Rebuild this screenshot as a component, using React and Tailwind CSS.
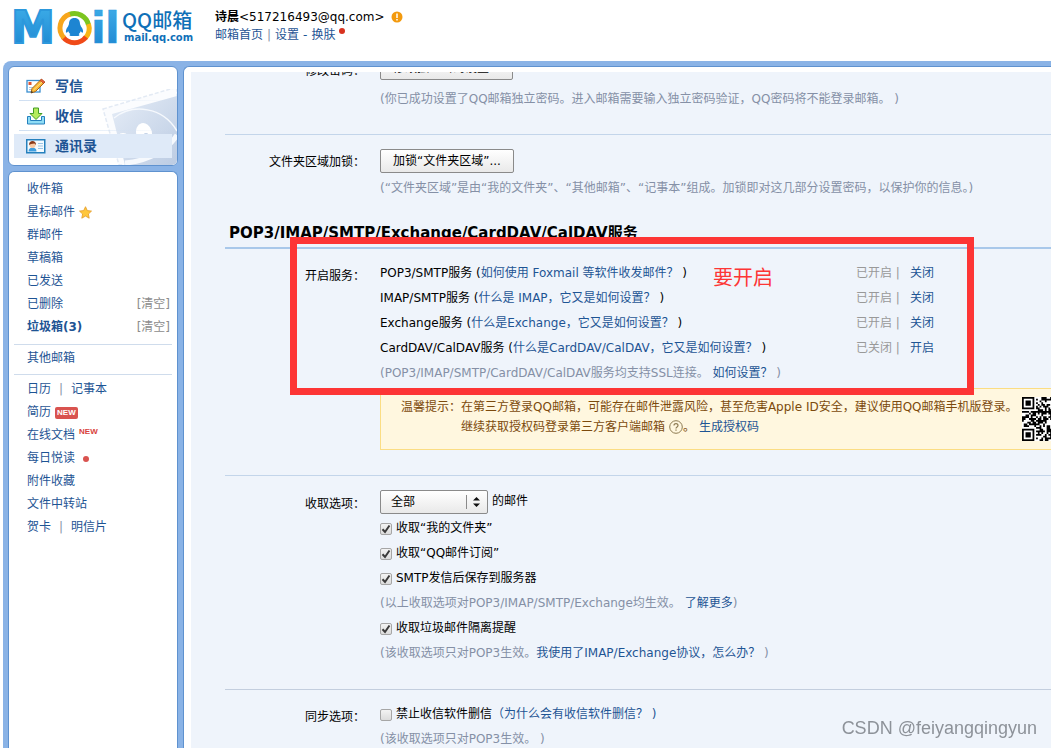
import React, { useState } from 'react';

// --- DATA ---
const mainFolders = [
  { name: '收件箱' },
  { name: '星标邮件', star: true },
  { name: '群邮件' },
  { name: '草稿箱' },
  { name: '已发送' },
  { name: '已删除', clear: true },
  { name: '垃圾箱(3)', clear: true, bold: true },
];

const services = [
  { name: 'POP3/SMTP服务', help: '如何使用 Foxmail 等软件收发邮件？', status: '已开启', action: '关闭' },
  { name: 'IMAP/SMTP服务', help: '什么是 IMAP，它又是如何设置？', status: '已开启', action: '关闭' },
  { name: 'Exchange服务', help: '什么是Exchange，它又是如何设置？', status: '已开启', action: '关闭' },
  { name: 'CardDAV/CalDAV服务', help: '什么是CardDAV/CalDAV，它又是如何设置？', status: '已关闭', action: '开启' },
];

// --- ICONS ---
const Logo = () => (
  <svg width="186" height="60" viewBox="0 0 186 60" className="shrink-0" role="img" aria-label="QQ邮箱">
    <defs>
      <linearGradient id="logoBlue" x1="0" y1="0" x2="0" y2="1">
        <stop offset="0" stopColor="#3fb0ea" />
        <stop offset="1" stopColor="#1b83cf" />
      </linearGradient>
    </defs>
    <g fill="url(#logoBlue)" stroke="#2c98dc" fontFamily="DejaVu Sans, sans-serif" fontWeight="bold" fontSize="43">
      <text x="0" y="43" fontSize="44" strokeWidth="2">M</text>
      <text x="80" y="43" strokeWidth=".5">i</text>
      <text x="94" y="43" strokeWidth=".5">l</text>
    </g>
    <circle cx="63.500" cy="28" r="18.500" fill="#fff" />
    <g fill="none" strokeWidth="5">
      <path d="M58 14.500A14.500 14.500 0 0 1 77.500 25" stroke="#7cc51f" />
      <path d="M77.500 24A14.500 14.500 0 0 1 74 38.500" stroke="#f9b515" />
      <path d="M75 37A14.500 14.500 0 0 1 52 37" stroke="#f04a18" />
      <path d="M53 38A14.500 14.500 0 0 1 59 14.200" stroke="#f7a61c" />
    </g>
    <path d="M63.500 18c-4 0-5.500 2.600-5.500 6l-1 2.500c-2 2.500-2.500 5-1.800 6.200.9 0 1.700-.8 1.900-1.700.6 1.400 1.300 2.300 2.200 3-1.300.9-.9 2 .7 2h7c1.600 0 2-1.100.7-2 .9-.7 1.600-1.600 2.200-3 .2.900 1 1.700 1.900 1.700.7-1.200.2-3.700-1.800-6.200l-1-2.500c0-3.400-1.500-6-5.500-6z" fill="#1d85d2" />
    <g fill="#0f70b8">
      <text x="111" y="28" fontSize="20" fontFamily="Noto Sans CJK SC, sans-serif" fontWeight="500">QQ邮箱</text>
      <text x="113" y="41" fontSize="10" fontFamily="DejaVu Sans, sans-serif" fontWeight="bold">mail.qq.com</text>
    </g>
  </svg>
);

const WriteIcon = () => (
  <svg width="20" height="16" viewBox="0 0 20 16">
    <rect x="1" y="2.500" width="13" height="11.500" fill="#fff" stroke="#3b8fd0" strokeWidth="1.300" />
    <rect x="2.500" y="4" width="3" height="3" fill="#e0532f" />
    <path d="M3 9.500h5M3 11.500h4" stroke="#a9c8e4" />
    <path d="M5 15l1-4.500L15 1.500l3.500 3L9.500 13.500z" fill="#f9b935" stroke="#a8641a" />
    <path d="M14 2.500l1.500-1.500 3.500 3L17.500 5.500z" fill="#e9623f" stroke="#a8401a" strokeWidth=".7" />
    <path d="M7.500 12L16 4" stroke="#fde08a" />
    <path d="M5 15l.500-2.300 1.700 1.500z" fill="#333" />
  </svg>
);

const ReceiveIcon = () => (
  <svg width="20" height="18" viewBox="0 0 20 18">
    <path d="M1.500 9.500h3v4h11v-4h3v7.500h-17z" fill="#8fdcf5" stroke="#2580bd" />
    <path d="M7.500 1h5v5.500h3.500L10 12.500 4 6.500h3.500z" fill="#b6ec5c" stroke="#449c25" />
  </svg>
);

const ContactIcon = () => (
  <svg width="20" height="15" viewBox="0 0 20 15">
    <rect x=".75" y=".75" width="18" height="13" fill="#f4fbff" stroke="#2580bd" strokeWidth="1.500" />
    <path d="M2.500 12.500c0-3 2-4 4-4s4 1 4 4z" fill="#3f9ee0" />
    <circle cx="6.500" cy="6" r="3" fill="#f8c9a4" />
    <path d="M3 6c0-3 1.500-4 3.500-4S10 3 10 6L8.500 4.500 5 5z" fill="#8b3a1a" />
    <path d="M12 4.500h5M12 7h5M12 9.500h5" stroke="#9cc4e4" />
  </svg>
);

const StarIcon = () => (
  <svg width="13" height="13" viewBox="0 0 13 13" className="ml-1">
    <path d="M6.500.7l1.800 3.900 4.200.5-3.100 2.900.8 4.200-3.700-2.100-3.700 2.100.8-4.200L.5 5.100l4.200-.5z" fill="#ffc73c" stroke="#e39a28" strokeWidth=".8" />
  </svg>
);

const StampArt = () => (
  <svg width="76" height="76" viewBox="0 0 76 76">
    <defs>
      <linearGradient id="stampBlue" x1="0" y1="0" x2="1" y2="1">
        <stop offset="0" stopColor="#e6edf7" />
        <stop offset="1" stopColor="#bccce3" />
      </linearGradient>
    </defs>
    <path d="M2 20L76 -2V76H18z" fill="#fbfcfe" stroke="#e3eaf4" strokeWidth="1.500" strokeDasharray="4 2" />
    <path d="M11 25L76 7V76H24z" fill="url(#stampBlue)" />
    <path d="M13 29C32 14 62 18 76 42" fill="none" stroke="#f6f9fd" strokeWidth="1.500" />
    <ellipse cx="43" cy="44" rx="8" ry="10" transform="rotate(-15 43 44)" fill="#fff" />
    <ellipse cx="45" cy="48" rx="3" ry="4" fill="#c0d0e6" />
    <ellipse cx="22" cy="52" rx="7" ry="8" fill="#fff" />
    <path d="M24 74C46 72 66 62 76 46" fill="none" stroke="#f6f9fd" strokeWidth="5" />
  </svg>
);

const QrCode = () => {
  const size = 25;
  const cells = [];
  const finder = (x, y) => {
    if (x > 7 && x < size - 8) return null;
    if (y > 7 && y < size - 8) return null;
    if (x > 7 && y > 7) return null;
    const fx = x > 7 ? size - 1 - x : x;
    const fy = y > 7 ? size - 1 - y : y;
    if (fx === 7 || fy === 7) return false;
    const d = Math.max(Math.abs(fx - 3), Math.abs(fy - 3));
    return d !== 2;
  };
  for (let y = 0; y < size; y++) {
    for (let x = 0; x < size; x++) {
      const f = finder(x, y);
      const noise = (x * 37 + y * 61 + x * y * 17 + ((x * x) ^ (y * 7))) % 11 < 6;
      if (f === null ? noise : f) cells.push(`M${x} ${y}h1v1h-1z`);
    }
  }
  return (
    <svg width="44" height="44" viewBox="0 0 25 25" className="-mb-1 ml-1 shrink-0">
      <rect width="25" height="25" fill="#fff" />
      <path d={cells.join('')} fill="#000" />
    </svg>
  );
};

// --- SMALL PARTS ---
const Link = ({ children, className = '' }) => (
  <a href="#" className={`text-[#1e5494] hover:underline ${className}`}>{children}</a>
);

const Check = ({ label, defaultChecked, children }) => {
  const [on, setOn] = useState(!!defaultChecked);
  return (
    <div className="flex items-center">
      <label className="flex items-center gap-1">
        <span className="relative flex">
          <input type="checkbox" checked={on} onChange={(e) => setOn(e.target.checked)} className="size-3 appearance-none rounded-xs border border-[#a6a6a6] bg-linear-to-b from-[#f3f3f3] to-[#dcdcdc]" />
          {on && (
            <svg width="12" height="12" viewBox="0 0 12 12" className="pointer-events-none absolute inset-0">
              <path d="M2.500 6.300l2.500 2.700 4.500-6.500" fill="none" stroke="#3a3a3a" strokeWidth="2" />
            </svg>
          )}
        </span>
        {label}
      </label>
      {children}
    </div>
  );
};

const Row = ({ label, className = '', children }) => (
  <section className={`flex ${className}`}>
    <div className="w-[140px] shrink-0 text-right mr-[15px] pt-[3px]">{label}</div>
    <div className="min-w-0 flex-1">{children}</div>
  </section>
);

const GrayButton = ({ children }) => (
  <button className="block h-6 rounded-xs border border-[#8a8a8a] bg-linear-to-b from-white to-[#e9e9e9] px-3 leading-5">{children}</button>
);

const Bar = () => <span className="mx-2 text-[#8a94a6]">|</span>;

const NavItem = ({ icon, label, active }) => (
  <a href="#" className={`flex h-6 items-center pl-3 text-sm font-bold text-[#1e5494] ${active ? 'bg-[#dfeaf8]' : ''}`}>
    <span className="w-[29px]">{icon}</span>
    {label}
  </a>
);

const App = () => {
  const [range, setRange] = useState('全部');

  return (
    <div className="flex h-screen flex-col overflow-hidden bg-white font-['DejaVu_Sans','Noto_Sans_CJK_SC',sans-serif] text-xs text-black">
      {/* HEADER */}
      <header className="flex h-[61px] shrink-0 items-start gap-[18px] pl-[11px]">
        <Logo />
        <div className="pt-2 leading-[18px]">
          <div className="flex items-center">
            <b>诗晨</b>&lt;517216493@qq.com&gt;
            <svg width="12" height="12" viewBox="0 0 12 12" className="ml-[6px]">
              <circle cx="6" cy="6" r="5.500" fill="#f39a0e" />
              <path d="M6 2.500v4.500M6 8v1.500" stroke="#fff" strokeWidth="1.500" />
            </svg>
          </div>
          <div className="flex text-[#1e5494]">
            <Link>邮箱首页</Link>
            <span className="mx-1 text-[#8a94a6]">|</span>
            <Link>设置</Link>
            <span className="mx-1">-</span>
            <Link>换肤</Link>
            <span className="ml-1 mt-[2px] size-1.5 rounded-full bg-[#d8321f]" />
          </div>
        </div>
      </header>

      {/* BLUE FRAME */}
      <div className="ml-[3px] flex min-h-0 flex-1 gap-[5px] rounded-tl-lg bg-[#8ab3e6] pl-[5px] pt-[5px]">
        <aside className="flex w-[170px] shrink-0 flex-col gap-[5px]">
          <nav className="relative overflow-hidden rounded-md border border-[#5f92cf] bg-white px-[5px] pb-[7px] pt-[7px]">
            <div className="absolute right-0 bottom-0"><StampArt /></div>
            <div className="relative flex flex-col">
              <NavItem icon={<WriteIcon />} label="写信" />
              <div className="mt-[2px] mb-[3px] ml-[5px] h-px bg-linear-to-r from-[#cfdff2] to-transparent" />
              <NavItem icon={<ReceiveIcon />} label="收信" />
              <div className="mt-[2px] mb-[3px] ml-[5px] h-px bg-linear-to-r from-[#cfdff2] to-transparent" />
              <NavItem icon={<ContactIcon />} label="通讯录" active />
            </div>
          </nav>

          <nav className="flex-1 rounded-t-md border border-b-0 border-[#5f92cf] bg-white px-[5px] pt-[6px] leading-[23px]">
            <ul>
              {mainFolders.map((f) => (
                <li key={f.name} className="flex items-center pl-[13px] pr-[2px]">
                  <Link className={f.bold ? 'font-bold' : ''}>{f.name}</Link>
                  {f.star && <StarIcon />}
                  {f.clear && <a href="#" className="ml-auto text-[#8c8c8c]">[清空]</a>}
                </li>
              ))}
            </ul>
            <div className="mt-[5px] border-y border-[#cfdcec] pl-[13px] pb-[4px] pt-[2px]">
              <Link>其他邮箱</Link>
            </div>
            <ul className="mt-[3px] pl-[13px]">
              <li><Link>日历</Link><Bar /><Link>记事本</Link></li>
              <li className="flex items-center gap-1">
                <Link>简历</Link>
                <span className="rounded-xs bg-[#d9534f] px-0.5 font-['Liberation_Sans',sans-serif] text-[8px] font-bold leading-3 text-white">NEW</span>
              </li>
              <li className="flex gap-1">
                <Link>在线文档</Link>
                <span className="font-['Liberation_Sans',sans-serif] text-[8px] font-bold leading-4 text-[#d9423c]">NEW</span>
              </li>
              <li className="flex items-center gap-2">
                <Link>每日悦读</Link>
                <span className="size-1.5 rounded-full bg-[#d9534f]" />
              </li>
              <li><Link>附件收藏</Link></li>
              <li><Link>文件中转站</Link></li>
              <li><Link>贺卡</Link><Bar /><Link>明信片</Link></li>
            </ul>
          </nav>
        </aside>

        {/* SETTINGS */}
        <main className="flex min-w-0 flex-1 flex-col rounded-tl-md border-l border-t border-[#5f92cf] bg-white pl-[7px] pt-[5px]">
          <div className="min-h-0 flex-1 overflow-hidden bg-[#eff4fb] pl-[34px] leading-[25px]">
            <Row label="修改密码：" className="-mt-4 pb-[22px]">
              <GrayButton>修改独立密码设置...</GrayButton>
              <p className="mt-[7px] text-[#8590a6]">(你已成功设置了QQ邮箱独立密码。进入邮箱需要输入独立密码验证，QQ密码将不能登录邮箱。 )</p>
            </Row>

            <Row label={<span className="-mt-[2px] block">文件夹区域加锁：</span>} className="border-t border-[#c3d5ea] pt-[14px]">
              <GrayButton>加锁“文件夹区域”...</GrayButton>
              <p className="mt-[3px] text-[#8590a6]">(“文件夹区域”是由“我的文件夹”、“其他邮箱”、“记事本”组成。加锁即对这几部分设置密码，以保护你的信息。)</p>
            </Row>

            <h2 className="mt-[18px] border-b-2 border-[#a9c8ea] pl-1 text-[15px] font-bold leading-7">POP3/IMAP/SMTP/Exchange/CardDAV/CalDAV服务</h2>

            <div className="relative">
              <Row label="开启服务：" className="pt-3">
                <ul>
                  {services.map((s) => (
                    <li key={s.name} className="flex">
                      <div className="w-[476px] shrink-0">
                        {s.name} (<Link>{s.help}</Link> )
                      </div>
                      <span className="text-[#999]">{s.status} |</span>
                      <Link className="ml-[10px]">{s.action}</Link>
                    </li>
                  ))}
                </ul>
                <p className="text-[#8590a6]">(POP3/IMAP/SMTP/CardDAV/CalDAV服务均支持SSL连接。 <Link>如何设置？</Link> )</p>

                <div className="mt-[2px] flex items-start overflow-hidden whitespace-nowrap border border-r-0 border-[#fbdd83] bg-[#fff7df] pl-5 pb-3 pt-2 leading-5 text-[#7c4a0c]">
                  <span className="shrink-0">温馨提示：</span>
                  <div className="shrink-0">
                    <p>在第三方登录QQ邮箱，可能存在邮件泄露风险，甚至危害Apple ID安全，建议使用QQ邮箱手机版登录。</p>
                    <p className="flex items-center">
                      继续获取授权码登录第三方客户端邮箱
                      <svg width="14" height="14" viewBox="0 0 14 14" className="ml-1" fill="none" stroke="#8d7b52">
                        <circle cx="7" cy="7" r="6.300" />
                        <path d="M5 5.500c0-2.700 4-2.500 4 0 0 1.500-2 1.300-2 3M7 9.500v1.300" strokeWidth="1.200" />
                      </svg>
                      。<Link className="ml-1">生成授权码</Link>
                    </p>
                  </div>
                  <QrCode />
                </div>
              </Row>

              {/* red annotation */}
              <div className="pointer-events-none absolute -top-3 left-[65px] h-[158px] w-[684px] border-[7px] border-[#fd3535]">
                <p className="absolute left-[416px] top-[20px] text-xl leading-7 text-[#fd3535]">要开启</p>
              </div>
            </div>

            <Row label="收取选项：" className="mt-[25px] border-t border-[#c3d5ea] pt-[13px]">
              <div className="flex items-start gap-1">
                <div className="relative mt-px">
                  <select aria-label="收取范围" value={range} onChange={(e) => setRange(e.target.value)} className="block h-6 w-[108px] appearance-none rounded-xs border border-[#8a8a8a] bg-linear-to-b from-white to-[#e9e9e9] pl-[10px] leading-5">
                    <option>全部</option>
                    <option>最近30天</option>
                  </select>
                  <svg width="22" height="24" viewBox="0 0 22 24" className="pointer-events-none absolute right-0 top-0">
                    <path d="M.5 5v14" stroke="#8a8a8a" />
                    <path d="M7 10.500h7L10.500 7zM7 13.500h7L10.500 17z" fill="#111" />
                  </svg>
                </div>
                <span className="leading-6">的邮件</span>
              </div>
              <div className="mt-[2px]">
                <Check label="收取“我的文件夹”" defaultChecked />
                <Check label="收取“QQ邮件订阅”" defaultChecked />
                <Check label="SMTP发信后保存到服务器" defaultChecked />
                <p className="text-[#8590a6]">(以上收取选项对POP3/IMAP/SMTP/Exchange均生效。 <Link>了解更多</Link>)</p>
                <Check label="收取垃圾邮件隔离提醒" defaultChecked />
                <p className="text-[#8590a6]">(该收取选项只对POP3生效。<Link>我使用了IMAP/Exchange协议，怎么办？</Link> )</p>
              </div>
            </Row>

            <Row label="同步选项：" className="mt-[23px] border-t border-[#c3cede] pt-3">
              <Check label="禁止收信软件删信">
                <span className="text-[#1e5494]">（<Link>为什么会有收信软件删信？</Link> )</span>
              </Check>
              <p className="text-[#8590a6]">(该收取选项只对POP3生效。 )</p>
            </Row>
          </div>
        </main>
      </div>

      <div className="pointer-events-none fixed bottom-2 right-[14px] font-['Liberation_Sans',sans-serif] text-lg leading-6 text-[#8d9299]">CSDN @feiyangqingyun</div>
    </div>
  );
};

export default App;
